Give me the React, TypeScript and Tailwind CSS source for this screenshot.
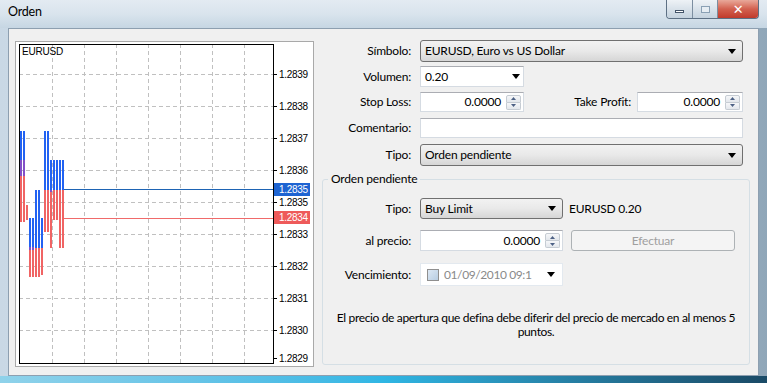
import React from "react";

const ui = "font-['Lato','Noto_Sans',sans-serif] text-[12px] tracking-[-0.2px] text-black";

function Arrow() {
  return (
    <svg width="8" height="5" viewBox="0 0 8 5" className="shrink-0">
      <polygon points="0,0 8,0 4,5" fill="#000" />
    </svg>
  );
}

function Spin() {
  return (
    <div className="flex flex-col w-[15px] h-[15px] mr-[1px]">
      <div className="flex-1 flex items-center justify-center border border-[#c6ccd3] bg-gradient-to-b from-[#f6f7f9] to-[#e3e7ec] rounded-t-[2px]">
        <svg width="5" height="3" viewBox="0 0 5 3">
          <polygon points="0,3 5,3 2.5,0" fill="#4d6185" />
        </svg>
      </div>
      <div className="flex-1 flex items-center justify-center border border-t-0 border-[#c6ccd3] bg-gradient-to-b from-[#f6f7f9] to-[#e3e7ec] rounded-b-[2px]">
        <svg width="5" height="3" viewBox="0 0 5 3">
          <polygon points="0,0 5,0 2.5,3" fill="#4d6185" />
        </svg>
      </div>
    </div>
  );
}

function Combo({ text, w }: { text: string; w: string }) {
  return (
    <div
      className={`${w} h-full flex items-center justify-between pl-[4px] pr-[6px] rounded-[3px] border border-[#707070] bg-gradient-to-b from-[#f2f2f2] via-[#e9e9e9] to-[#d6d6d6]`}
    >
      <span>{text}</span>
      <Arrow />
    </div>
  );
}

function NumBox({ w }: { w: string }) {
  return (
    <div className={`${w} h-full flex items-center justify-end bg-white border border-[#d5dbe2] border-t-[#abadb3] pr-[1px]`}>
      <span className="mr-[5px]">0.0000</span>
      <Spin />
    </div>
  );
}

function Row({
  label,
  children,
  h = "h-[21px]",
  mt,
  lw = "w-[89px]",
}: {
  label: string;
  children: React.ReactNode;
  h?: string;
  mt: string;
  lw?: string;
}) {
  return (
    <div className={`flex items-center ${h} ${mt}`}>
      <div className={`${lw} text-right shrink-0`}>{label}</div>
      <div className="ml-[9px] h-full flex items-center">{children}</div>
    </div>
  );
}

// price bars, by page x: blue top/bottom, red top/bottom
const B = "#2262f2";
const R = "#f06464";
const P = "#8250c8";
function barAt(x: number): [number, number, number, number] {
  if (x <= 25) return [131, 176, 160, 222];
  if (x <= 26) return [205, 205, 205, 220];
  if (x <= 34) return [218, 250, 247, 277];
  if (x <= 40) return [190, 248, 248, 277];
  if (x <= 42) return [218, 248, 248, 275];
  if (x <= 48) return [131, 190, 190, 232];
  if (x <= 52) return [160, 192, 190, 248];
  if (x <= 56) return [160, 190, 190, 220];
  return [160, 190, 190, 248];
}
const cols: number[] = [];
for (let x = 20; x <= 62; x += 3) cols.push(x);

const levels = ["1.2839", "1.2838", "1.2837", "1.2836", "1.2835", "1.2833", "1.2832", "1.2831", "1.2830"];
const levelY = [32, 64, 96, 128, 160, 192, 224, 256, 288];
const mono = "Liberation Sans, Arial, sans-serif";

function Chart() {
  // local coords: page x - 16, page y - 42
  return (
    <svg width="297" height="324" className="block" shapeRendering="crispEdges">
      {levelY.map((y) => (
        <line key={"h" + y} x1="3" x2="257" y1={y + 0.5} y2={y + 0.5} stroke="#c0c0c0" strokeDasharray="4 3" />
      ))}
      {[36, 68, 100, 132, 164, 196, 228].map((x) => (
        <line key={"v" + x} x1={x + 0.5} x2={x + 0.5} y1="2" y2="321" stroke="#c0c0c0" strokeDasharray="4 3" />
      ))}
      {cols.map((x) => {
        const [bt, bb, rt, rb] = barAt(x);
        const ov = Math.max(0, bb - rt);
        return (
          <g key={x}>
            <rect x={x - 16} y={rt - 42} width="2" height={rb - rt} fill={R} />
            {bb > bt && <rect x={x - 16} y={bt - 42} width="2" height={bb - bt} fill={B} />}
            {ov > 0 && <rect x={x - 16} y={rt - 42} width="2" height={ov} fill={P} />}
          </g>
        );
      })}
      <rect x="48" y="147" width="210" height="1" fill="#1e64b4" />
      <rect x="48" y="176" width="210" height="1" fill="#f06a6a" />
      <rect x="3.5" y="2.5" width="254" height="319" fill="none" stroke="#000" />
      <text x="6" y="13" fontSize="10" fontFamily={mono} fill="#000">EURUSD</text>
      {levels.map((t, i) => (
        <g key={t + i}>
          <line x1="258" x2="261" y1={levelY[i] + 0.5} y2={levelY[i] + 0.5} stroke="#000" />
          <text x="263" y={levelY[i] + 4} fontSize="10" letterSpacing="-0.3" fontFamily={mono} fill="#000">{t}</text>
        </g>
      ))}
      <line x1="258" x2="261" y1="316.5" y2="316.5" stroke="#000" />
      <text x="263" y="320" fontSize="10" letterSpacing="-0.3" fontFamily={mono} fill="#000">1.2829</text>
      <rect x="258" y="141" width="36" height="13" fill="#1e64d2" />
      <text x="263" y="151" fontSize="10" letterSpacing="-0.3" fontFamily={mono} fill="#fff">1.2835</text>
      <rect x="258" y="169" width="36" height="13" fill="#ee5a5a" />
      <text x="263" y="179" fontSize="10" letterSpacing="-0.3" fontFamily={mono} fill="#fff">1.2834</text>
    </svg>
  );
}

export default function App() {
  return (
    <div className={`w-[767px] h-[383px] flex flex-col overflow-hidden bg-gradient-to-r from-[#c9d8e5] via-[#dfe8ef] to-[#8fa6b8] ${ui}`}>
      {/* title bar */}
      <div className="relative h-[28px] shrink-0 flex items-center pl-[8px] bg-gradient-to-b from-[#e3ebf2] via-[#d9e4ed] to-[#c6d6e3]">
        <span className="text-[12.5px] leading-none -mt-[3px]">Orden</span>
        <div className="absolute right-[8px] top-0 flex h-[19px] rounded-b-[4px] overflow-hidden border border-t-0 border-[#5d7084]">
          <div className="w-[26px] flex items-center justify-center bg-gradient-to-b from-[#eef2f6] to-[#c4d2de] border-r border-[#7c8ea0]">
            <div className="w-[9px] h-[3px] mt-[5px] bg-white border border-[#44556a]" />
          </div>
          <div className="w-[25px] flex items-center justify-center bg-gradient-to-b from-[#eef2f6] to-[#c4d2de] border-r border-[#7c8ea0]">
            <div className="w-[9px] h-[7px] border border-[#8aa0b4] bg-[#e6edf3]" />
          </div>
          <div className="w-[40px] flex items-center justify-center bg-gradient-to-b from-[#e8a89a] via-[#d2604f] to-[#c0392b]">
            <span className="text-white font-bold text-[13px] leading-none font-['DejaVu_Sans',sans-serif]">✕</span>
          </div>
        </div>
      </div>

      {/* client area */}
      <div className="flex-1 px-[8px] flex">
        <div className="flex-1 flex bg-[#f0f0f0] border border-[#8d9fb0] pl-[6px] pt-[12px] pb-[8px]">
          {/* chart */}
          <div className="w-[299px] h-[326px] border border-[#a9a9a9] bg-white shrink-0">
            <Chart />
          </div>

          {/* form */}
          <div className="ml-[8px] w-[428px] flex flex-col -mt-[1px]">
            <Row label="Símbolo:" h="h-[22px]" mt="mt-0">
              <Combo text="EURUSD, Euro vs US Dollar" w="w-[323px]" />
            </Row>
            <Row label="Volumen:" mt="mt-[4px]">
              <div className="w-[104px] h-full flex items-center justify-between pl-[4px] pr-[3px] bg-white border border-[#d5dbe2] border-t-[#abadb3]">
                <span>0.20</span>
                <Arrow />
              </div>
            </Row>
            <div className="flex items-center h-[20px] mt-[5px]">
              <div className="w-[89px] text-right shrink-0">Stop Loss:</div>
              <div className="ml-[9px] h-full">
                <NumBox w="w-[104px]" />
              </div>
              <div className="w-[107px] text-right shrink-0">Take Profit:</div>
              <div className="ml-[6px] h-full">
                <NumBox w="w-[106px]" />
              </div>
            </div>
            <Row label="Comentario:" h="h-[20px]" mt="mt-[6px]">
              <div className="w-[323px] h-full bg-white border border-[#d5dbe2] border-t-[#abadb3]" />
            </Row>
            <Row label="Tipo:" h="h-[22px]" mt="mt-[6px]">
              <Combo text="Orden pendiente" w="w-[323px]" />
            </Row>

            <fieldset className="mt-[4px] h-[195px] border border-[#d5dfe5] rounded-[3px] flex flex-col">
              <legend className="ml-[5px] px-[3px]">Orden pendiente</legend>
              <Row label="Tipo:" mt="mt-[10px]" lw="w-[88px]">
                <Combo text="Buy Limit" w="w-[143px]" />
                <span className="ml-[6px]">EURUSD 0.20</span>
              </Row>
              <Row label="al precio:" mt="mt-[11px]" lw="w-[88px]">
                <NumBox w="w-[143px]" />
                <div className="ml-[8px] w-[164px] h-full flex items-center justify-center rounded-[3px] border border-[#adb2b5] bg-[#f4f4f4] text-[#a0a0a0]">
                  Efectuar
                </div>
              </Row>
              <Row label="Vencimiento:" h="h-[23px]" mt="mt-[12px]" lw="w-[88px]">
                <div className="w-[143px] h-full flex items-center pl-[6px] bg-white border border-[#e3e9ef]">
                  <div className="w-[12px] h-[12px] shrink-0 border border-[#8f8f8f] bg-gradient-to-br from-[#dce8f4] to-[#b8cde2]" />
                  <span className="ml-[5px] text-[#8a8a8a] tracking-[-0.4px] whitespace-nowrap">01/09/2010 09:1</span>
                  <div className="ml-[16px]">
                    <Arrow />
                  </div>
                </div>
              </Row>
              <p className="mt-[25px] text-center leading-[14px] px-[2px] tracking-[-0.35px]">
                El precio de apertura que defina debe diferir del precio de mercado en al menos 5 puntos.
              </p>
            </fieldset>
          </div>
        </div>
      </div>

      {/* bottom frame */}
      <div className="h-[8px] shrink-0 bg-gradient-to-r from-[#8fd2ea] via-[#2fb6e4] to-[#1a4a66]" />
    </div>
  );
}
